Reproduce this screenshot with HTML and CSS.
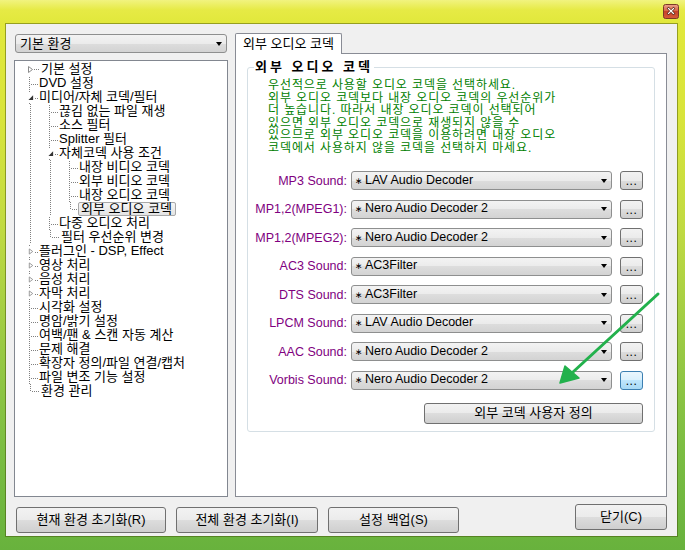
FILE: index.html
```html
<!DOCTYPE html>
<html lang="ko">
<head>
<meta charset="utf-8">
<title>환경 설정</title>
<link rel="stylesheet" href="styles.css">
</head>
<body>
<div class="window">
  <div class="titlebar">
    <div class="closebox">
      <svg width="16" height="15" viewBox="0 0 16 15">
        <defs>
          <linearGradient id="cg" x1="0" y1="0" x2="0" y2="1">
            <stop offset="0" stop-color="#eaa18d"/>
            <stop offset="0.45" stop-color="#d9664a"/>
            <stop offset="0.5" stop-color="#c8432a"/>
            <stop offset="1" stop-color="#d55a3a"/>
          </linearGradient>
        </defs>
        <rect x="0.5" y="0.5" width="15" height="14" rx="2" fill="url(#cg)" stroke="#7b3a26"/>
        <path d="M5.5 4.5 L10.5 9.5 M10.5 4.5 L5.5 9.5" stroke="#5b2a1c" stroke-width="2.6" stroke-linecap="square"/>
        <path d="M5.5 4.5 L10.5 9.5 M10.5 4.5 L5.5 9.5" stroke="#ffffff" stroke-width="1.2" stroke-linecap="square"/>
      </svg>
    </div>
  </div>
  <div class="client">
    <div class="main">
      <div class="leftcol">
        <div class="combo top-combo"><span class="cval">기본 환경</span><span class="carrow"></span></div>
        <div class="tree">
          <div class="row"><span class="c f"><svg class="ex" width="7" height="11" viewBox="0 0 7 11"><rect width="7" height="11" fill="#fff"/><path d="M1.5 2.5 L5.5 5.5 L1.5 8.5 Z" fill="#fff" stroke="#8c8c8c"/></svg></span><span class="t">기본 설정</span></div>
          <div class="row"><span class="c t"></span><span class="t">DVD 설정</span></div>
          <div class="row"><span class="c t"><svg class="ex" width="7" height="11" viewBox="0 0 7 11"><rect width="7" height="11" fill="#fff"/><path d="M6 3 L6 8.5 L0.5 8.5 Z" fill="#333"/></svg></span><span class="t">미디어/자체 코덱/필터</span></div>
          <div class="row"><span class="c p"></span><span class="c t"></span><span class="t">끊김 없는 파일 재생</span></div>
          <div class="row"><span class="c p"></span><span class="c t"></span><span class="t">소스 필터</span></div>
          <div class="row"><span class="c p"></span><span class="c t"></span><span class="t">Splitter 필터</span></div>
          <div class="row"><span class="c p"></span><span class="c t"><svg class="ex" width="7" height="11" viewBox="0 0 7 11"><rect width="7" height="11" fill="#fff"/><path d="M6 3 L6 8.5 L0.5 8.5 Z" fill="#333"/></svg></span><span class="t">자체코덱 사용 조건</span></div>
          <div class="row"><span class="c p"></span><span class="c p"></span><span class="c t"></span><span class="t">내장 비디오 코덱</span></div>
          <div class="row"><span class="c p"></span><span class="c p"></span><span class="c t"></span><span class="t">외부 비디오 코덱</span></div>
          <div class="row"><span class="c p"></span><span class="c p"></span><span class="c t"></span><span class="t">내장 오디오 코덱</span></div>
          <div class="row"><span class="c p"></span><span class="c p"></span><span class="c e"></span><span class="t sel">외부 오디오 코덱</span></div>
          <div class="row"><span class="c p"></span><span class="c t"></span><span class="t">다중 오디오 처리</span></div>
          <div class="row"><span class="c p"></span><span class="c e"></span><span class="t">필터 우선순위 변경</span></div>
          <div class="row"><span class="c t"><svg class="ex" width="7" height="11" viewBox="0 0 7 11"><rect width="7" height="11" fill="#fff"/><path d="M1.5 2.5 L5.5 5.5 L1.5 8.5 Z" fill="#fff" stroke="#8c8c8c"/></svg></span><span class="t">플러그인 - DSP, Effect</span></div>
          <div class="row"><span class="c t"><svg class="ex" width="7" height="11" viewBox="0 0 7 11"><rect width="7" height="11" fill="#fff"/><path d="M1.5 2.5 L5.5 5.5 L1.5 8.5 Z" fill="#fff" stroke="#8c8c8c"/></svg></span><span class="t">영상 처리</span></div>
          <div class="row"><span class="c t"><svg class="ex" width="7" height="11" viewBox="0 0 7 11"><rect width="7" height="11" fill="#fff"/><path d="M1.5 2.5 L5.5 5.5 L1.5 8.5 Z" fill="#fff" stroke="#8c8c8c"/></svg></span><span class="t">음성 처리</span></div>
          <div class="row"><span class="c t"><svg class="ex" width="7" height="11" viewBox="0 0 7 11"><rect width="7" height="11" fill="#fff"/><path d="M1.5 2.5 L5.5 5.5 L1.5 8.5 Z" fill="#fff" stroke="#8c8c8c"/></svg></span><span class="t">자막 처리</span></div>
          <div class="row"><span class="c t"></span><span class="t">시각화 설정</span></div>
          <div class="row"><span class="c t"></span><span class="t">명암/밝기 설정</span></div>
          <div class="row"><span class="c t"></span><span class="t">여백/팬 &amp; 스캔 자동 계산</span></div>
          <div class="row"><span class="c t"></span><span class="t">문제 해결</span></div>
          <div class="row"><span class="c t"></span><span class="t">확장자 정의/파일 연결/캡처</span></div>
          <div class="row"><span class="c t"></span><span class="t">파일 변조 기능 설정</span></div>
          <div class="row"><span class="c e"></span><span class="t">환경 관리</span></div>
        </div>
      </div>
      <div class="rightcol">
        <div class="tabs"><div class="tab">외부 오디오 코덱</div></div>
        <div class="panel">
          <fieldset class="group">
            <legend>외부 오디오 코덱</legend>
            <p class="desc">우선적으로 사용할 오디오 코덱을 선택하세요.<br>외부 오디오 코덱보다 내장 오디오 코덱의 우선순위가<br>더 높습니다. 따라서 내장 오디오 코덱이 선택되어<br>있으면 외부 오디오 코덱으로 재생되지 않을 수<br>있으므로 외부 오디오 코덱을 이용하려면 내장 오디오<br>코덱에서 사용하지 않을 코덱을 선택하지 마세요.</p>
            <div class="rows">
              <div class="srow"><span class="lbl">MP3 Sound:</span><div class="combo sel-combo"><span class="cval"><span class="star">∗</span>LAV Audio Decoder</span><span class="carrow"></span></div><div class="btn dots">...</div></div>
              <div class="srow"><span class="lbl">MP1,2(MPEG1):</span><div class="combo sel-combo"><span class="cval"><span class="star">∗</span>Nero Audio Decoder 2</span><span class="carrow"></span></div><div class="btn dots">...</div></div>
              <div class="srow"><span class="lbl">MP1,2(MPEG2):</span><div class="combo sel-combo"><span class="cval"><span class="star">∗</span>Nero Audio Decoder 2</span><span class="carrow"></span></div><div class="btn dots">...</div></div>
              <div class="srow"><span class="lbl">AC3 Sound:</span><div class="combo sel-combo"><span class="cval"><span class="star">∗</span>AC3Filter</span><span class="carrow"></span></div><div class="btn dots">...</div></div>
              <div class="srow"><span class="lbl">DTS Sound:</span><div class="combo sel-combo"><span class="cval"><span class="star">∗</span>AC3Filter</span><span class="carrow"></span></div><div class="btn dots">...</div></div>
              <div class="srow"><span class="lbl">LPCM Sound:</span><div class="combo sel-combo"><span class="cval"><span class="star">∗</span>LAV Audio Decoder</span><span class="carrow"></span></div><div class="btn dots">...</div></div>
              <div class="srow"><span class="lbl">AAC Sound:</span><div class="combo sel-combo"><span class="cval"><span class="star">∗</span>Nero Audio Decoder 2</span><span class="carrow"></span></div><div class="btn dots">...</div></div>
              <div class="srow"><span class="lbl">Vorbis Sound:</span><div class="combo sel-combo"><span class="cval"><span class="star">∗</span>Nero Audio Decoder 2</span><span class="carrow"></span></div><div class="btn dots hot">...</div></div>
            </div>
            <div class="custom-row"><div class="btn custom">외부 코덱 사용자 정의</div></div>
          </fieldset>
        </div>
      </div>
    </div>
    <div class="bottom">
      <div class="btn b1">현재 환경 초기화(R)</div>
      <div class="btn b2">전체 환경 초기화(I)</div>
      <div class="btn b3">설정 백업(S)</div>
      <div class="btn b4">닫기(C)</div>
    </div>
  </div>
</div>
<svg class="annot" width="685" height="550" viewBox="0 0 685 550">
  <line x1="658" y1="294" x2="573" y2="372" stroke="#22b14c" stroke-width="3" stroke-linecap="round"/>
  <path d="M560 383 L565 366 L579 378 Z" fill="#22b14c" stroke="#22b14c" stroke-width="1.5" stroke-linejoin="round"/>
</svg>
</body>
</html>
```
FILE: styles.css
```css
* { box-sizing: border-box; }
html, body { margin: 0; padding: 0; }
body {
  width: 685px;
  height: 550px;
  overflow: hidden;
  position: relative;
  font: 13px/14px "Liberation Sans", "Noto Sans CJK KR", sans-serif;
  color: #000;
  background:
    linear-gradient(to bottom, #f1f37f 0px, #e6ea45 10px, #e1e83b 23px, #d8e43b 120px, #c0da42 230px, #98c944 350px, #7bbd42 450px, #68b23d 550px);
}
.window { display: flex; flex-direction: column; height: 550px; }
.titlebar {
  height: 23px;
  display: flex;
  justify-content: flex-end;
  padding: 4px 6px 0 0;
}
.closebox { width: 16px; height: 15px; }
.closebox svg { display: block; }

.client {
  flex: 1;
  margin: 0 7px 13px 5px;
  background: #f0f0f0;
  background-clip: padding-box;
  border: 1px solid rgba(60, 70, 0, 0.45);
  display: flex;
  flex-direction: column;
  padding: 9px 10px 0 8px;
}
.main { display: flex; height: 464px; gap: 7px; }
.leftcol { width: 214px; display: flex; flex-direction: column; }
.rightcol { width: 432px; display: flex; flex-direction: column; }

/* combobox */
.combo {
  height: 19px;
  border: 1px solid #8e8f8f;
  border-radius: 3px;
  background: linear-gradient(to bottom, #f3f3f3 0%, #ebebeb 50%, #dddddd 50%, #d3d3d3 100%);
  display: flex;
  align-items: center;
  padding: 0 4px 0 3px;
}
.top-combo { margin: 1px 1px 0 1px; }
.cval { flex: 1; line-height: 17px; white-space: nowrap; }
.sel-combo .cval { font-size: 12.5px; }
.top-combo .cval { padding-left: 1px; }
.carrow {
  width: 0; height: 0;
  border-left: 3.5px solid transparent;
  border-right: 3.5px solid transparent;
  border-top: 4px solid #000;
}
.star { font-family: "DejaVu Sans", sans-serif; font-size: 9px; margin-right: 3px; display: inline-block; width: 7px; }

/* tree */
.tree {
  flex: 1;
  margin-top: 7px;
  border: 1px solid #828790;
  background: #fff;
  padding: 1px 0 0 5px;
}
.row { display: flex; height: 14px; align-items: center; white-space: nowrap; }
.c {
  --vl: repeating-linear-gradient(to bottom, #808080 0 1px, transparent 1px 2px);
  --hl: repeating-linear-gradient(to right, #808080 0 1px, transparent 1px 2px);
  width: 20px; height: 14px; flex: none;
  display: flex; align-items: center;
}
.c.p { background: var(--vl) 10px 0 / 1px 14px no-repeat; }
.c.t { background: var(--vl) 10px 0 / 1px 14px no-repeat, var(--hl) 12px 7px / 8px 1px no-repeat; }
.c.e { background: var(--vl) 10px 0 / 1px 8px no-repeat, var(--hl) 12px 7px / 8px 1px no-repeat; }
.c.f { background: var(--vl) 10px 8px / 1px 6px no-repeat, var(--hl) 12px 7px / 8px 1px no-repeat; }
.ex { margin-left: 7px; display: block; }
.t {
  margin-left: -2px;
  padding: 0 3px 0 2px;
  border: 1px solid transparent;
  border-radius: 2px;
  line-height: 12px;
}
.t.sel {
  border-color: #a8a8a8;
  background: linear-gradient(to bottom, #f6f6f6, #e4e4e4);
}

/* tabs */
.tabs { height: 21px; display: flex; }
.tab {
  width: 107px;
  height: 21px;
  border: 1px solid #898c95;
  border-bottom: none;
  border-radius: 2px 2px 0 0;
  background: #fff;
  padding-left: 7px;
  line-height: 19px;
  position: relative;
  z-index: 1;
}
.panel {
  flex: 1;
  margin-top: -1px;
  border: 1px solid #898c95;
  background: #fff;
  padding: 0 11px;
}
.group {
  margin: 6px 0 0 0;
  border: 1px solid #d5dfe5;
  border-radius: 3px;
  padding: 5px 0 7px 0;
  min-width: 0;
}
.group legend {
  margin-left: 6px;
  padding: 0 1px;
  font-weight: bold;
  line-height: 14px;
  letter-spacing: 3px;
}
.desc {
  margin: 0;
  padding-left: 20px;
  color: #008000;
  font-size: 12px;
  line-height: 12.5px;
  letter-spacing: 0.9px;
  white-space: nowrap;
}
.rows { margin-top: 17px; }
.srow { display: flex; align-items: center; height: 19px; margin-bottom: 9.5px; }
.srow:last-child { margin-bottom: 0; }
.lbl { width: 99px; text-align: right; color: #800080; margin-right: 4px; white-space: nowrap; font-size: 12.5px; }
.sel-combo { width: 261px; }

.btn {
  border: 1px solid #707070;
  border-radius: 3px;
  background: linear-gradient(to bottom, #f2f2f2 0%, #ebebeb 50%, #dddddd 50%, #cfcfcf 100%);
  display: flex;
  align-items: center;
  justify-content: center;
  white-space: nowrap;
}
.dots {
  width: 23px; height: 19px; margin-left: 8px;
  align-items: flex-end;
  line-height: 12px;
  padding-bottom: 2px;
  letter-spacing: 0.5px;
  font-size: 12px;
}
.dots.hot {
  border-color: #3c7fb1;
  background: linear-gradient(to bottom, #eaf6fd 0%, #d9f0fc 50%, #bee6fd 50%, #a7d9f5 100%);
}
.custom-row { display: flex; justify-content: flex-end; margin-top: 13px; padding-right: 11px; }
.custom { width: 219px; height: 21px; }

.bottom { display: flex; align-items: flex-start; margin-top: 10px; }
.bottom .btn { height: 26px; }
.b1 { width: 150px; margin-left: 2px; }
.b2 { width: 142px; margin-left: 10px; }
.b3 { width: 131px; margin-left: 10px; }
.b4 { width: 92px; margin-left: auto; margin-top: -3px; }

.annot { position: absolute; left: 0; top: 0; pointer-events: none; }
```
